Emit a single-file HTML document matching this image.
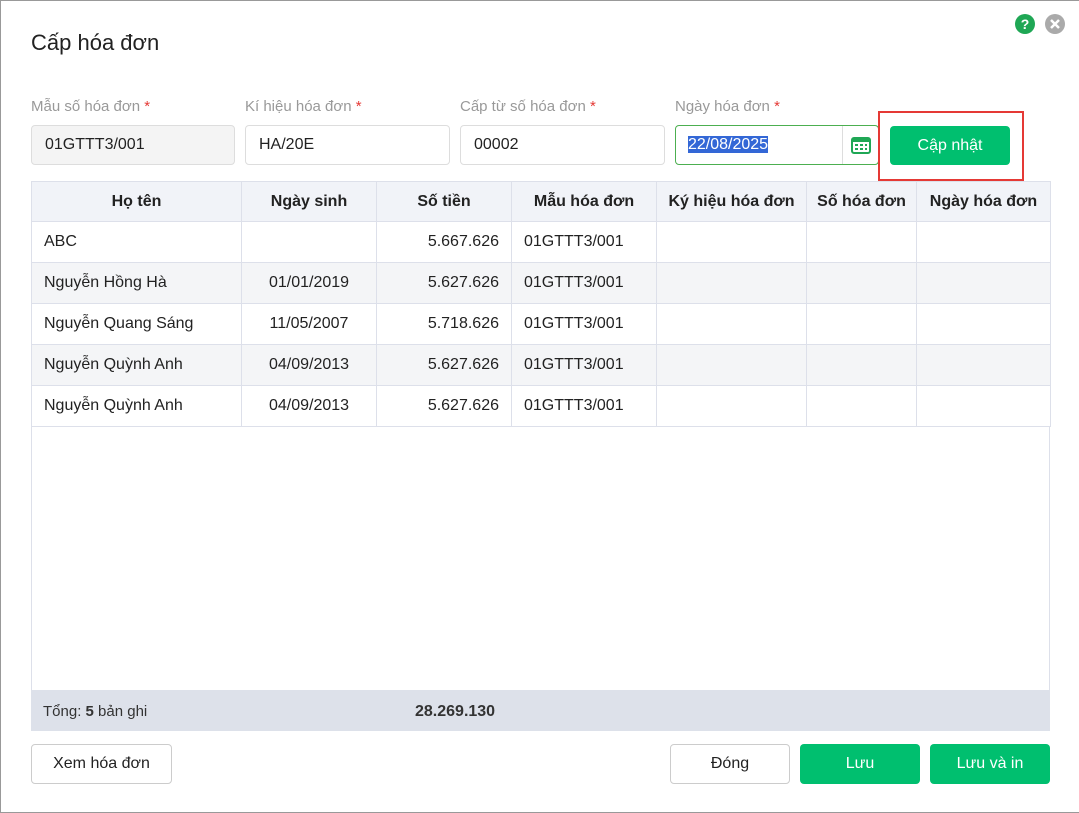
<!DOCTYPE html>
<html><head><meta charset="utf-8"><style>
*{box-sizing:border-box;margin:0;padding:0}
body{width:1079px;height:813px;background:#fff;font-family:"Liberation Sans",sans-serif;position:relative;overflow:hidden;color:#222}
.frame{position:absolute;left:0;top:0;width:1079px;height:813px;border:1px solid #999;border-right:none;border-bottom:1px solid #999}
.abs{position:absolute}
h1{position:absolute;left:31px;top:30px;font-size:22px;font-weight:normal;color:#222}
.lbl{position:absolute;top:98px;font-size:15px;color:#999}
.lbl b{color:#e53935;font-weight:normal}
.inp{position:absolute;top:125px;height:40px;border:1px solid #ddd;border-radius:4px;font-size:16px;padding:10px 13px;color:#222}
table{position:absolute;left:31px;top:181px;border-collapse:collapse;font-size:16px;table-layout:fixed;width:1019px}
td,th{border:1px solid #dde0ea;height:41px;padding:0 12px;white-space:nowrap;overflow:hidden}
th{background:#f1f3f8;height:40px;font-weight:bold;text-align:center;padding:0 4px}
.r{text-align:right}.c{text-align:center}
tr.alt td{background:#f4f5f7}
.btn{position:absolute;top:744px;height:40px;border-radius:4px;font-size:16px;display:flex;align-items:center;justify-content:center}
.g{background:#00bf6f;color:#fff}
.w{border:1px solid #ccc;color:#222;background:#fff}
</style></head><body>
<div class="frame"></div>
<h1>Cấp hóa đơn</h1>
<svg class="abs" style="left:1015px;top:14px" width="20" height="20"><circle cx="10" cy="10" r="10" fill="#1fa755"/><text x="10" y="15" font-size="14" font-weight="bold" fill="#fff" text-anchor="middle" font-family="Liberation Sans">?</text></svg>
<svg class="abs" style="left:1045px;top:14px" width="20" height="20"><circle cx="10" cy="10" r="10" fill="#aaa"/><path d="M6 6L14 14M14 6L6 14" stroke="#fff" stroke-width="2.5"/></svg>
<div class="lbl" style="left:31px">Mẫu số hóa đơn <b>*</b></div>
<div class="lbl" style="left:245px">Kí hiệu hóa đơn <b>*</b></div>
<div class="lbl" style="left:460px">Cấp từ số hóa đơn <b>*</b></div>
<div class="lbl" style="left:675px">Ngày hóa đơn <b>*</b></div>
<div class="inp" style="left:31px;width:204px;background:#f4f4f4">01GTTT3/001</div>
<div class="inp" style="left:245px;width:205px">HA/20E</div>
<div class="inp" style="left:460px;width:205px">00002</div>
<div class="inp" style="left:675px;width:204px;border-color:#4caf50;padding:10px 12px"><span style="background:#3367d6;color:#fff">22/08/2025</span></div>
<div class="abs" style="left:842px;top:126px;width:1px;height:38px;background:#ddd"></div>
<svg class="abs" style="left:851px;top:136px" width="20" height="18"><rect x="1" y="2" width="18" height="15" rx="2" fill="none" stroke="#1fa755" stroke-width="2"/><rect x="1" y="2" width="18" height="4" fill="#1fa755"/><path d="M4 9h3M9 9h3M14 9h2M4 13h3M9 13h3M14 13h2" stroke="#1fa755" stroke-width="2"/></svg>
<div class="abs" style="left:878px;top:111px;width:146px;height:70px;border:2px solid #e53935"></div>
<div class="abs g" style="left:890px;top:126px;width:120px;height:39px;border-radius:4px;display:flex;align-items:center;justify-content:center;font-size:16px">Cập nhật</div>
<table>
<colgroup><col style="width:210px"><col style="width:135px"><col style="width:135px"><col style="width:145px"><col style="width:150px"><col style="width:110px"><col style="width:134px"></colgroup>
<tr><th>Họ tên</th><th>Ngày sinh</th><th>Số tiền</th><th>Mẫu hóa đơn</th><th>Ký hiệu hóa đơn</th><th>Số hóa đơn</th><th>Ngày hóa đơn</th></tr>
<tr><td>ABC</td><td></td><td class="r">5.667.626</td><td>01GTTT3/001</td><td></td><td></td><td></td></tr>
<tr class="alt"><td>Nguyễn Hồng Hà</td><td class="c">01/01/2019</td><td class="r">5.627.626</td><td>01GTTT3/001</td><td></td><td></td><td></td></tr>
<tr><td>Nguyễn Quang Sáng</td><td class="c">11/05/2007</td><td class="r">5.718.626</td><td>01GTTT3/001</td><td></td><td></td><td></td></tr>
<tr class="alt"><td>Nguyễn Quỳnh Anh</td><td class="c">04/09/2013</td><td class="r">5.627.626</td><td>01GTTT3/001</td><td></td><td></td><td></td></tr>
<tr><td>Nguyễn Quỳnh Anh</td><td class="c">04/09/2013</td><td class="r">5.627.626</td><td>01GTTT3/001</td><td></td><td></td><td></td></tr>
</table>
<div class="abs" style="left:31px;top:426px;width:1019px;height:264px;border:1px solid #dde0ea;border-top:none;border-bottom:none"></div>
<div class="abs" style="left:31px;top:690px;width:1019px;height:41px;background:#dde1ea;font-size:15px;padding:13px 12px;color:#333">Tổng: <b>5</b> bản ghi<b style="position:absolute;left:384px;top:13px;font-size:16px">28.269.130</b></div>
<div class="btn w" style="left:31px;width:141px">Xem hóa đơn</div>
<div class="btn w" style="left:670px;width:120px">Đóng</div>
<div class="btn g" style="left:800px;width:120px">Lưu</div>
<div class="btn g" style="left:930px;width:120px">Lưu và in</div>
</body></html>
